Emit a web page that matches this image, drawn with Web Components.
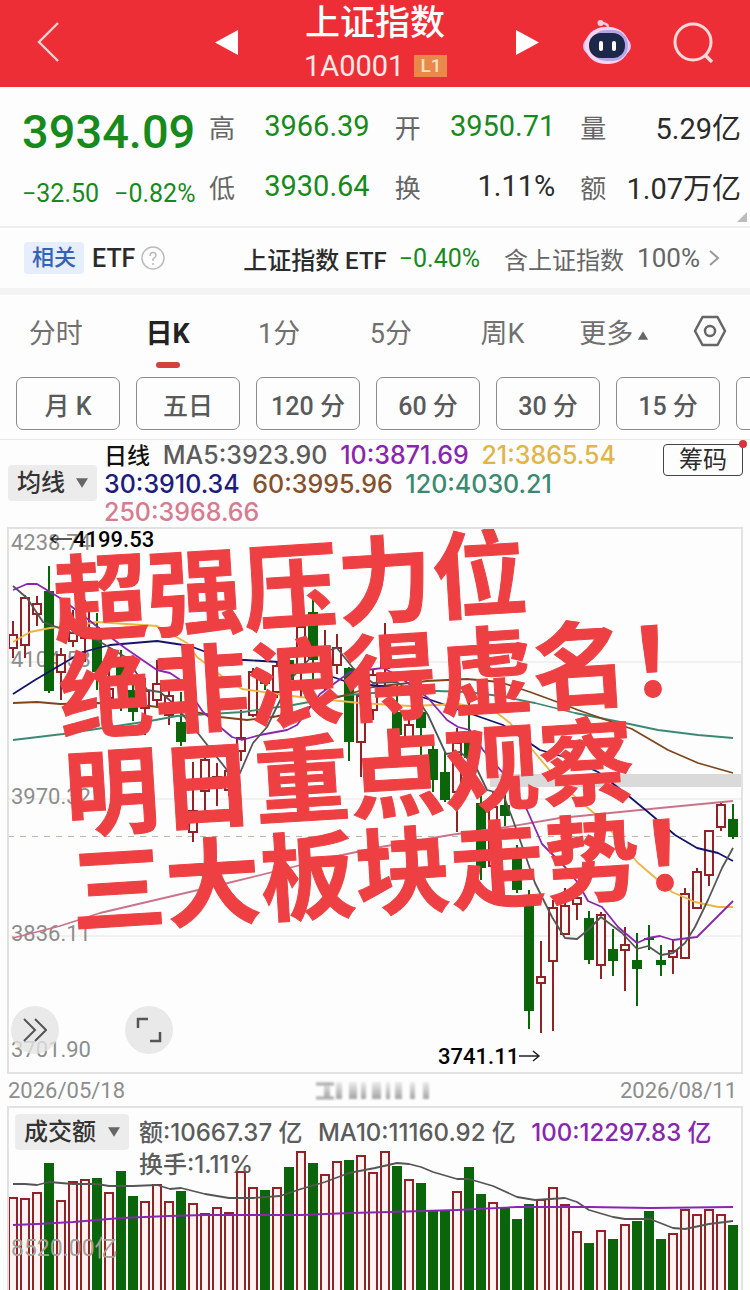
<!DOCTYPE html>
<html lang="zh-CN">
<head>
<meta charset="utf-8">
<meta name="viewport" content="width=device-width, initial-scale=1">
<title>上证指数</title>
<style>
  body {
    margin: 0;
    background: #fdfdfd;
    color: #2b2b2b;
    font-family: Roboto, "Noto Sans CJK SC", sans-serif;
    overflow-x: hidden;
  }
</style>
</head>
<body>
<stock-page></stock-page>

<script>
const RED = "#8f2327";
const GREEN = "#0b660b";

const resetStyle = `
  :host, * { box-sizing: border-box; }
  button, select { font: inherit; color: inherit; background: none; border: 0; margin: 0; padding: 0; cursor: pointer; }
  a { color: inherit; text-decoration: none; }
  svg { display: block; }
`;

// color, high, body top, body bottom, low, volume top
const days = [
  ["r", 621, 634, 648, 658, 1197], ["r", 595, 597, 645, 658, 1198], ["r", 596, 603, 614, 626, 1192],
  ["g", 566, 591, 691, 693, 1163], ["r", 648, 654, 672, 700, 1200], ["r", 610, 632, 641, 647, 1181],
  ["r", 600, 606, 638, 662, 1179], ["g", 613, 628, 672, 690, 1178], ["r", 670, 688, 698, 706, 1192],
  ["g", 650, 657, 676, 711, 1171], ["g", 680, 690, 712, 721, 1196], ["r", 678, 690, 708, 735, 1201],
  ["r", 660, 683, 700, 708, 1184], ["r", 690, 695, 715, 725, 1201], ["g", 692, 722, 742, 746, 1191],
  ["r", 762, 810, 832, 842, 1203], ["r", 755, 759, 791, 811, 1213], ["r", 763, 776, 788, 806, 1207],
  ["r", 764, 770, 790, 796, 1212], ["r", 710, 737, 751, 761, 1171], ["r", 668, 671, 715, 717, 1187],
  ["g", 672, 676, 684, 690, 1190], ["r", 661, 665, 692, 698, 1187], ["g", 650, 660, 680, 690, 1167],
  ["r", 608, 626, 672, 697, 1151], ["g", 592, 612, 660, 680, 1163], ["r", 630, 650, 672, 690, 1174],
  ["r", 634, 647, 665, 674, 1161], ["g", 667, 668, 742, 761, 1160], ["r", 690, 695, 742, 777, 1155],
  ["r", 670, 674, 710, 720, 1172], ["r", 623, 650, 668, 690, 1151], ["g", 685, 712, 735, 745, 1166],
  ["r", 715, 724, 738, 745, 1179], ["g", 700, 712, 728, 755, 1183], ["g", 745, 749, 780, 792, 1211],
  ["g", 752, 772, 800, 802, 1211], ["r", 728, 742, 792, 832, 1191], ["g", 692, 742, 758, 770, 1167],
  ["g", 796, 803, 868, 880, 1194], ["r", 792, 806, 866, 890, 1202], ["g", 795, 805, 816, 826, 1207],
  ["g", 845, 855, 890, 893, 1219], ["g", 890, 900, 1011, 1029, 1204], ["r", 941, 976, 983, 1033, 1199],
  ["r", 900, 907, 961, 1031, 1187], ["r", 888, 905, 934, 934, 1204], ["r", 890, 897, 904, 920, 1231],
  ["g", 911, 918, 960, 964, 1243], ["r", 912, 914, 965, 979, 1230], ["g", 929, 949, 961, 976, 1239],
  ["r", 927, 944, 950, 991, 1224], ["g", 933, 960, 969, 1006, 1221], ["g", 925, 938, 940, 950, 1211],
  ["g", 945, 960, 965, 976, 1239], ["r", 940, 950, 957, 974, 1233], ["r", 888, 893, 958, 958, 1209],
  ["r", 868, 871, 908, 908, 1214], ["r", 830, 830, 875, 886, 1209], ["r", 803, 804, 827, 831, 1214],
  ["g", 804, 819, 837, 839, 1225]
];

const averages = [
  ["#c97489", "13,938 60,926 100,913 228,883 333,857 375,848 450,835 507,827 560,818 660,808 733,801"],
  ["#3a8a72", "13,740 63,734 150,721 177,716 243,712 293,705 347,695 400,691 437,691 467,692 500,696 535,703 575,713 620,722 658,730 698,735 733,738"],
  ["#7d451c", "13,703 37,702 60,704 97,703 150,706 195,712 220,717 247,720 273,717 293,713 325,701 373,687 427,681 467,679 500,682 530,692 560,703 578,710 632,729 668,750 698,763 733,773"],
  ["#14146e", "13,694 35,680 57,667 83,652 110,645 157,641 190,646 227,660 245,660 280,662 310,668 333,677 350,683 390,687 428,699 460,710 503,725 540,750 568,758 598,772 625,793 648,812 675,835 697,848 718,853 733,861"],
  ["#ebb540", "13,642 30,632 50,628 80,625 97,622 157,626 187,643 197,657 223,677 242,689 277,694 300,697 360,703 410,706 460,704 497,713 510,723 535,753 552,773 575,797 602,820 638,863 672,892 695,902 718,907 733,907"],
  ["#8826b0", "13,590 27,584 37,584 60,598 80,613 113,639 125,648 157,670 170,673 182,681 203,712 220,727 232,737 242,740 260,735 287,730 297,725 320,694 350,672 383,668 397,675 428,698 447,720 458,727 470,730 483,750 503,773 527,810 542,844 565,867 578,883 588,901 602,907 618,927 637,943 648,938 660,936 673,940 697,937 733,901"],
  ["#555", "13,586 27,598 43,622 70,632 97,640 127,658 147,690 160,692 173,703 197,732 227,770 240,773 253,743 267,727 290,680 313,655 337,648 353,668 373,683 397,682 415,695 428,715 446,754 460,752 475,765 487,790 503,794 513,820 535,883 552,917 565,938 577,939 588,930 601,917 622,933 637,949 648,946 661,955 673,953 685,943 695,927 708,900 722,868 733,848"]
];

const volumeAverages = [
  ["#8826b0", "13,1225 37,1224 73,1222 121,1218 169,1216 205,1215 301,1215 350,1213 390,1212 457,1210 517,1207 589,1207 650,1208 733,1207"],
  ["#555", "13,1184 25,1184 37,1185 49,1182 73,1184 97,1184 109,1186 133,1186 157,1185 170,1189 181,1188 205,1194 229,1198 253,1198 280,1196 301,1189 325,1182 349,1173 375,1168 397,1163 409,1164 421,1167 433,1172 457,1179 469,1179 493,1186 517,1197 535,1200 565,1198 577,1202 589,1210 613,1217 625,1219 650,1219 673,1228 685,1229 709,1224 733,1221"]
];

const drawLines = list => list.map(([color, points]) =>
  `<polyline points="${points}" fill="none" stroke="${color}" stroke-width="1.8" stroke-linejoin="round"/>`).join("");

class StockHeader extends HTMLElement {
  connectedCallback() {
    this.attachShadow({mode: "open"}).innerHTML = `
      <style>
        ${resetStyle}
        :host { display: grid; grid-template-columns: 1fr auto 1fr; align-items: center; height: 87px; background: #ee2e36; color: #fff; }
        .left { display: flex; justify-content: space-between; padding: 0 66px 4px 36px; }
        .right { display: flex; justify-content: space-between; align-items: center; padding: 0 35px 4px 70px; }
        .center { width: 142px; text-align: center; }
        h1 { margin: 0; font-size: 35px; line-height: 44px; font-weight: 500; white-space: nowrap; }
        .code { display: flex; align-items: center; gap: 10px; font-size: 29px; line-height: 40px; color: #ffe9e6; }
        .level { padding: 0 6px; font-size: 19px; line-height: 22px; background: #e8884a; color: #ffe3bd; font-weight: 500; }
      </style>
      <div class="left">
        <button aria-label="返回"><svg width="24" height="42" viewBox="0 0 24 42"><path d="M22 2 3 21l19 19" fill="none" stroke="#ffd3d0" stroke-width="2.4"/></svg></button>
        <button aria-label="上一个"><svg width="24" height="42" viewBox="0 0 24 42"><path d="M24 9v25L1 21.500z" fill="#fff"/></svg></button>
      </div>
      <div class="center">
        <h1><slot></slot></h1>
        <div class="code"><span>1A0001</span><span class="level">L1</span></div>
      </div>
      <div class="right">
        <button aria-label="下一个"><svg width="24" height="42" viewBox="0 0 24 42"><path d="M0 9v25L23 21.500z" fill="#fff"/></svg></button>
        <button aria-label="智能助手"><svg width="48" height="46" viewBox="0 0 48 46">
          <path d="M25 10Q26 4 18 4" fill="none" stroke="#f7c3dd" stroke-width="2.500"/><circle cx="17.500" cy="4" r="3" fill="#f9cfdf"/>
          <ellipse cx="24" cy="27" rx="24" ry="14" fill="#e3c0f2"/>
          <rect x="2" y="8" width="44" height="37" rx="20" fill="#f5d6f0"/>
          <rect x="8" y="11" width="37" height="31" rx="15" fill="#b3a5e8"/>
          <rect x="6" y="14" width="36" height="25" rx="12" fill="#1d2749"/>
          <rect x="16" y="22" width="4" height="10" rx="2" fill="#fff"/><rect x="29" y="22" width="4" height="10" rx="2" fill="#fff"/>
        </svg></button>
        <button aria-label="搜索"><svg width="42" height="42" viewBox="0 0 42 42"><circle cx="20" cy="21" r="18" fill="none" stroke="#ffd9d7" stroke-width="3"/><path d="m32 34 7 7" stroke="#ffd9d7" stroke-width="3.500"/></svg></button>
      </div>`;
  }
}

class StockQuote extends HTMLElement {
  connectedCallback() {
    const items = [["高", "3966.39", "down"], ["开", "3950.71", "down"], ["量", "5.29亿", ""],
                   ["低", "3930.64", "down"], ["换", "1.11%", ""], ["额", "1.07万亿", ""]];
    this.attachShadow({mode: "open"}).innerHTML = `
      <style>
        ${resetStyle}
        :host { display: flex; position: relative; height: 141px; padding: 9px 9px 0 22px; border-bottom: 2px solid #ededed; }
        .last { width: 187px; flex: none; color: #178a1c; }
        .price { font-size: 47px; line-height: 72px; font-weight: 500; }
        .change { display: flex; gap: 15px; font-size: 25px; line-height: 52px; }
        dl { flex: 1; display: grid; grid-template-columns: repeat(3, 1fr); grid-auto-rows: 60px; column-gap: 25px; margin: 0; }
        dl div { display: flex; justify-content: space-between; align-items: center; white-space: nowrap; }
        dt { font-size: 26px; color: #666; }
        dd { margin: 0; font-size: 29px; }
        .down { color: #178a1c; }
        .corner { position: absolute; right: 3px; bottom: 4px; border: 5px solid #bbb; border-top-color: transparent; border-left-color: transparent; }
      </style>
      <div class="last">
        <div class="price">3934.09</div>
        <div class="change"><span>−32.50</span><span>−0.82%</span></div>
      </div>
      <dl>${items.map(([k, v, c]) => `<div><dt>${k}</dt><dd class="${c}">${v}</dd></div>`).join("")}</dl>
      <span class="corner"></span>`;
  }
}

class EtfRow extends HTMLElement {
  connectedCallback() {
    this.attachShadow({mode: "open"}).innerHTML = `
      <style>
        ${resetStyle}
        :host { display: block; border-bottom: 7px solid #f3f3f3; }
        a { display: flex; align-items: center; height: 60px; padding: 0 30px 0 24px; font-size: 25px; white-space: nowrap; }
        .tag { padding: 0 8px; font-size: 22px; line-height: 32px; border-radius: 4px; background: #e6edfb; color: #3462b5; font-weight: 500; }
        .etf { margin: 0 6px 0 8px; }
        .name { margin-left: auto; font-size: 24px; }
        .etf, .name { font-weight: 500; }
        .pct { margin: 0 24px 0 12px; color: #178a1c; }
        .include { font-size: 24px; margin-right: 13px; }
        .include, .full { color: #666; }
        .full { margin-right: 8px; font-size: 26px; }
      </style>
      <a href="#etf">
        <span class="tag">相关</span><span class="etf">ETF</span>
        <svg width="24" height="24" viewBox="0 0 24 24" fill="none" stroke="#bbb" stroke-width="1.500"><circle cx="12" cy="12" r="11"/><path d="M9 10q0-3.500 3-3.500T15 9.500Q15 11 12 13v2M12 17v2"/></svg>
        <span class="name">上证指数 ETF</span><span class="pct">−0.40%</span>
        <span class="include">含上证指数</span><span class="full">100%</span>
        <svg width="12" height="18" viewBox="0 0 12 18" fill="none" stroke="#999" stroke-width="2"><path d="m2 2 8 7-8 7"/></svg>
      </a>`;
  }
}

class PeriodTabs extends HTMLElement {
  connectedCallback() {
    const tabs = ["分时", "日K", "1分", "5分", "周K"];
    const chips = ["月 K", "五日", "120 分", "60 分", "30 分", "15 分"];
    this.attachShadow({mode: "open"}).innerHTML = `
      <style>
        ${resetStyle}
        :host { display: block; border-bottom: 1px solid #e8e8e8; padding-bottom: 9px; }
        nav { display: flex; height: 82px; color: #707070; font-size: 27px; }
        nav button { flex: 1; height: 72px; position: relative; white-space: nowrap; }
        .on { color: #222; font-weight: 700; }
        .on::after { content: ""; position: absolute; left: calc(50% - 12px); bottom: -1px; width: 24px; height: 6px; border-radius: 3px; background: #d2413f; }
        .more svg { display: inline-block; vertical-align: middle; margin-left: 4px; }
        nav .gear { flex: none; width: 80px; display: grid; place-items: center; }
        .chips { display: flex; gap: 16px; padding: 0 16px; overflow: hidden; }
        .chips button { flex: none; width: 104px; height: 53px; border: 1px solid #8a8a8a; border-radius: 7px; font-size: 25px; color: #5a5a5a; font-weight: 500; }
      </style>
      <nav>
        ${tabs.map((t, i) => `<button class="${i === 1 ? "on" : ""}">${t}</button>`).join("")}
        <button class="more">更多<svg width="12" height="9" viewBox="0 0 14 10"><path d="M7 0l6 10H1z" fill="#666"/></svg></button>
        <button class="gear" aria-label="设置"><svg width="34" height="32" viewBox="0 0 34 32" fill="none" stroke="#666" stroke-width="2.500" stroke-linejoin="round"><path d="M9.500 2h15L32 16l-7.500 14h-15L2 16z"/><circle cx="17" cy="16" r="5"/></svg></button>
      </nav>
      <div class="chips">${chips.map(c => `<button>${c}</button>`).join("")}<button aria-label="5分"></button></div>`;
  }
}

class DropDown extends HTMLElement {
  connectedCallback() {
    const label = this.getAttribute("label");
    this.attachShadow({mode: "open"}).innerHTML = `
      <style>
        ${resetStyle}
        :host { display: inline-block; position: relative; }
        select { display: block; width: 100%; appearance: none; height: 36px; padding: 0 30px 0 9px; font-size: 24px; line-height: 36px; color: #333; background: #ececec; border-radius: 4px; font-weight: 500; }
        svg { position: absolute; right: 9px; top: 13px; pointer-events: none; }
      </style>
      <select aria-label="${label}"><option>${label}</option></select>
      <svg width="12" height="10" viewBox="0 0 14 11"><path d="M0 0h14L7 11z" fill="#666"/></svg>`;
  }
}

class MaLegend extends HTMLElement {
  connectedCallback() {
    this.attachShadow({mode: "open"}).innerHTML = `
      <style>
        ${resetStyle}
        :host { display: flex; align-items: flex-start; height: 87px; padding: 1px 7px 0 8px; }
        drop-down { margin-top: 24px; flex: none; width: 89px; }
        p { flex: 1; margin: 0 0 0 7px; font: 500 25px/28px Inter, "Noto Sans CJK SC", sans-serif; white-space: nowrap; }
        p span { margin-right: 6px; }
        p .title { font-size: 23px; color: #111; }
        button { position: relative; flex: none; width: 80px; height: 32px; margin-top: 3px; border: 1px solid #444; border-radius: 4px; font-size: 24px; line-height: 28px; }
        button::after { content: ""; position: absolute; right: -5px; top: -5px; width: 8px; height: 8px; border-radius: 50%; background: #d63540; }
      </style>
      <drop-down label="均线"></drop-down>
      <p>
        <span class="title">日线</span> <span style="color:#5c5c5c">MA5:3923.90</span> <span style="color:#8826b0">10:3871.69</span> <span style="color:#e3b448">21:3865.54</span><br>
        <span style="color:#1c1c80">30:3910.34</span> <span style="color:#85502a">60:3995.96</span> <span style="color:#3a8a72">120:4030.21</span><br>
        <span style="color:#d77b90">250:3968.66</span>
      </p>
      <button>筹码</button>`;
  }
}

class CandleChart extends HTMLElement {
  connectedCallback() {
    const candles = days.map(([c, high, top, bottom, low], i) => {
      const x = 13 + i * 12;
      return c === "g"
        ? `<path d="M${x} ${high}V${low}" stroke="${GREEN}" stroke-width="2"/><rect x="${x - 5}" y="${top}" width="10" height="${bottom - top}" fill="${GREEN}"/>`
        : `<path d="M${x} ${high}V${top}M${x} ${bottom}V${low}" stroke="${RED}" stroke-width="2"/><rect x="${x - 4}" y="${top + 1}" width="8" height="${bottom - top - 1}" fill="#fff8f7" stroke="${RED}" stroke-width="2"/>`;
    }).join("");
    const grid = [662, 799, 936].map(y => `<path d="M8 ${y}H742" stroke="#e6e6e6"/>`).join("");
    const scale = [["4238.74", 550], ["4104.53", 667], ["3970.32", 804], ["3836.11", 941], ["3701.90", 1057]]
      .map(([t, y]) => `<text x="11" y="${y}">${t}</text>`).join("");
    const slogan = ["超强压力位", "绝非浪得虚名！", "明日重点观察", "三大板块走势！"]
      .map((t, i) => `<text x="0" y="${i * 97}">${t}</text>`).join("");
    this.attachShadow({mode: "open"}).innerHTML = `
      <style>
        ${resetStyle}
        :host { display: block; position: relative; margin: 0 7px; border: 2px solid #e2e2e2; }
        svg.plot { width: 100%; height: auto; }
        .scale { font-size: 22px; fill: #8d8d8d; }
        .mark { font-size: 22px; fill: #000; font-weight: 500; }
        .slogan { font: 700 95px "Noto Sans CJK SC", sans-serif; fill: #ee4043; stroke: #ee4043; stroke-width: 1; }
        .tools { position: absolute; left: 2px; bottom: 18px; display: flex; gap: 66px; }
        .tools button { width: 48px; height: 48px; border-radius: 50%; background: rgba(228, 228, 228, .8); display: grid; place-items: center; }
      </style>
      <svg class="plot" viewBox="9 529 732 543">
        ${grid}
        <rect x="490" y="774" width="252" height="13" fill="#dadada"/>
        <path d="M8 836.500H742" stroke="#b9b9a9" stroke-dasharray="6 6"/>
        <g class="scale">${scale}</g>
        ${candles}
        ${drawLines(averages)}
        <g class="mark"><text x="73" y="547">4199.53</text><text x="438" y="1064">3741.11</text></g>
        <path d="M72 539H51m5-4-5 4 5 4M519 1056h20m-6-5 6 5-6 5" fill="none" stroke="#222" stroke-width="1.500"/>
        <g class="slogan" transform="translate(55 636) rotate(-3.500)">${slogan}</g>
      </svg>
      <div class="tools">
        <button aria-label="展开"><svg width="24" height="24" viewBox="0 0 24 24" fill="none" stroke="#555" stroke-width="2"><path d="m1 1 11 11L1 23M12 1l11 11-11 11"/></svg></button>
        <button aria-label="全屏"><svg width="26" height="26" viewBox="0 0 26 26" fill="none" stroke="#555" stroke-width="2.500"><path d="M2 11V2h10M24 15v9H14"/></svg></button>
      </div>`;
  }
}

class DateAxis extends HTMLElement {
  connectedCallback() {
    // the middle date is smudged out
    const bars = [[10, 6], [22, 6], [35, 8], [47, 5], [58, 9], [72, 4], [81, 7], [96, 5], [109, 6]]
      .map(([x, w]) => `<rect x="${x}" y="2" width="${w}" height="17" fill="url(#fade)"/>`).join("");
    this.attachShadow({mode: "open"}).innerHTML = `
      <style>
        ${resetStyle}
        :host { display: flex; justify-content: space-between; align-items: center; height: 32px; padding: 0 13px 0 8px; font-size: 22px; color: #8d8d8d; }
      </style>
      <time>2026/05/18</time>
      <svg width="118" height="21" viewBox="0 0 118 21" aria-hidden="true">
        <defs><linearGradient id="fade" x2="0" y2="1"><stop offset="0" stop-color="#ececec"/><stop offset="1" stop-color="#a2a2a2"/></linearGradient>
        <filter id="soft"><feGaussianBlur stdDeviation="1.300"/></filter></defs>
        <g filter="url(#soft)">${bars}<path d="M2 4h18M2 18h18" stroke="#aaa" stroke-width="3"/></g>
      </svg>
      <time>2026/08/11</time>`;
  }
}

class VolumeChart extends HTMLElement {
  connectedCallback() {
    const bars = days.map(([c, , , , , top], i) => {
      const x = 13 + i * 12;
      return c === "g"
        ? `<rect x="${x - 5}" y="${top}" width="10" height="${1300 - top}" fill="${GREEN}"/>`
        : `<rect x="${x - 4}" y="${top + 1}" width="8" height="${1300 - top}" fill="#fff3f2" stroke="${RED}" stroke-width="2"/>`;
    }).join("");
    this.attachShadow({mode: "open"}).innerHTML = `
      <style>
        ${resetStyle}
        :host { display: grid; margin: 0 7px; border: 2px solid #e2e2e2; border-bottom: 0; }
        svg, .info { grid-area: 1 / 1; }
        svg { width: 100%; height: auto; }
        text { font-size: 23px; fill: #a5a09a; }
        .info { z-index: 1; display: flex; align-items: flex-start; gap: 10px; padding: 6px 0 0 6px; align-self: start; }
        drop-down { flex: none; width: 114px; }
        p { margin: 0; padding-top: 3px; font: 500 24px/32px Inter, "Noto Sans CJK SC", sans-serif; color: #5c5c5c; white-space: nowrap; }
        p span { margin-right: 9px; }
      </style>
      <svg viewBox="9 1108 732 182">
        ${bars}
        ${drawLines(volumeAverages)}
        <text x="11" y="1256">8520.00亿</text>
      </svg>
      <div class="info">
        <drop-down label="成交额"></drop-down>
        <p><span>额:10667.37 亿</span> <span>MA10:11160.92 亿</span> <span style="color:#8826b0">100:12297.83 亿</span><br><span>换手:1.11%</span></p>
      </div>`;
  }
}

class StockPage extends HTMLElement {
  connectedCallback() {
    this.attachShadow({mode: "open"}).innerHTML = `
      <style>:host { display: block; }</style>
      <stock-header>上证指数</stock-header>
      <stock-quote></stock-quote>
      <etf-row></etf-row>
      <period-tabs></period-tabs>
      <ma-legend></ma-legend>
      <candle-chart></candle-chart>
      <date-axis></date-axis>
      <volume-chart></volume-chart>`;
  }
}

customElements.define("drop-down", DropDown);
customElements.define("stock-header", StockHeader);
customElements.define("stock-quote", StockQuote);
customElements.define("etf-row", EtfRow);
customElements.define("period-tabs", PeriodTabs);
customElements.define("ma-legend", MaLegend);
customElements.define("candle-chart", CandleChart);
customElements.define("date-axis", DateAxis);
customElements.define("volume-chart", VolumeChart);
customElements.define("stock-page", StockPage);
</script>
</body>
</html>
